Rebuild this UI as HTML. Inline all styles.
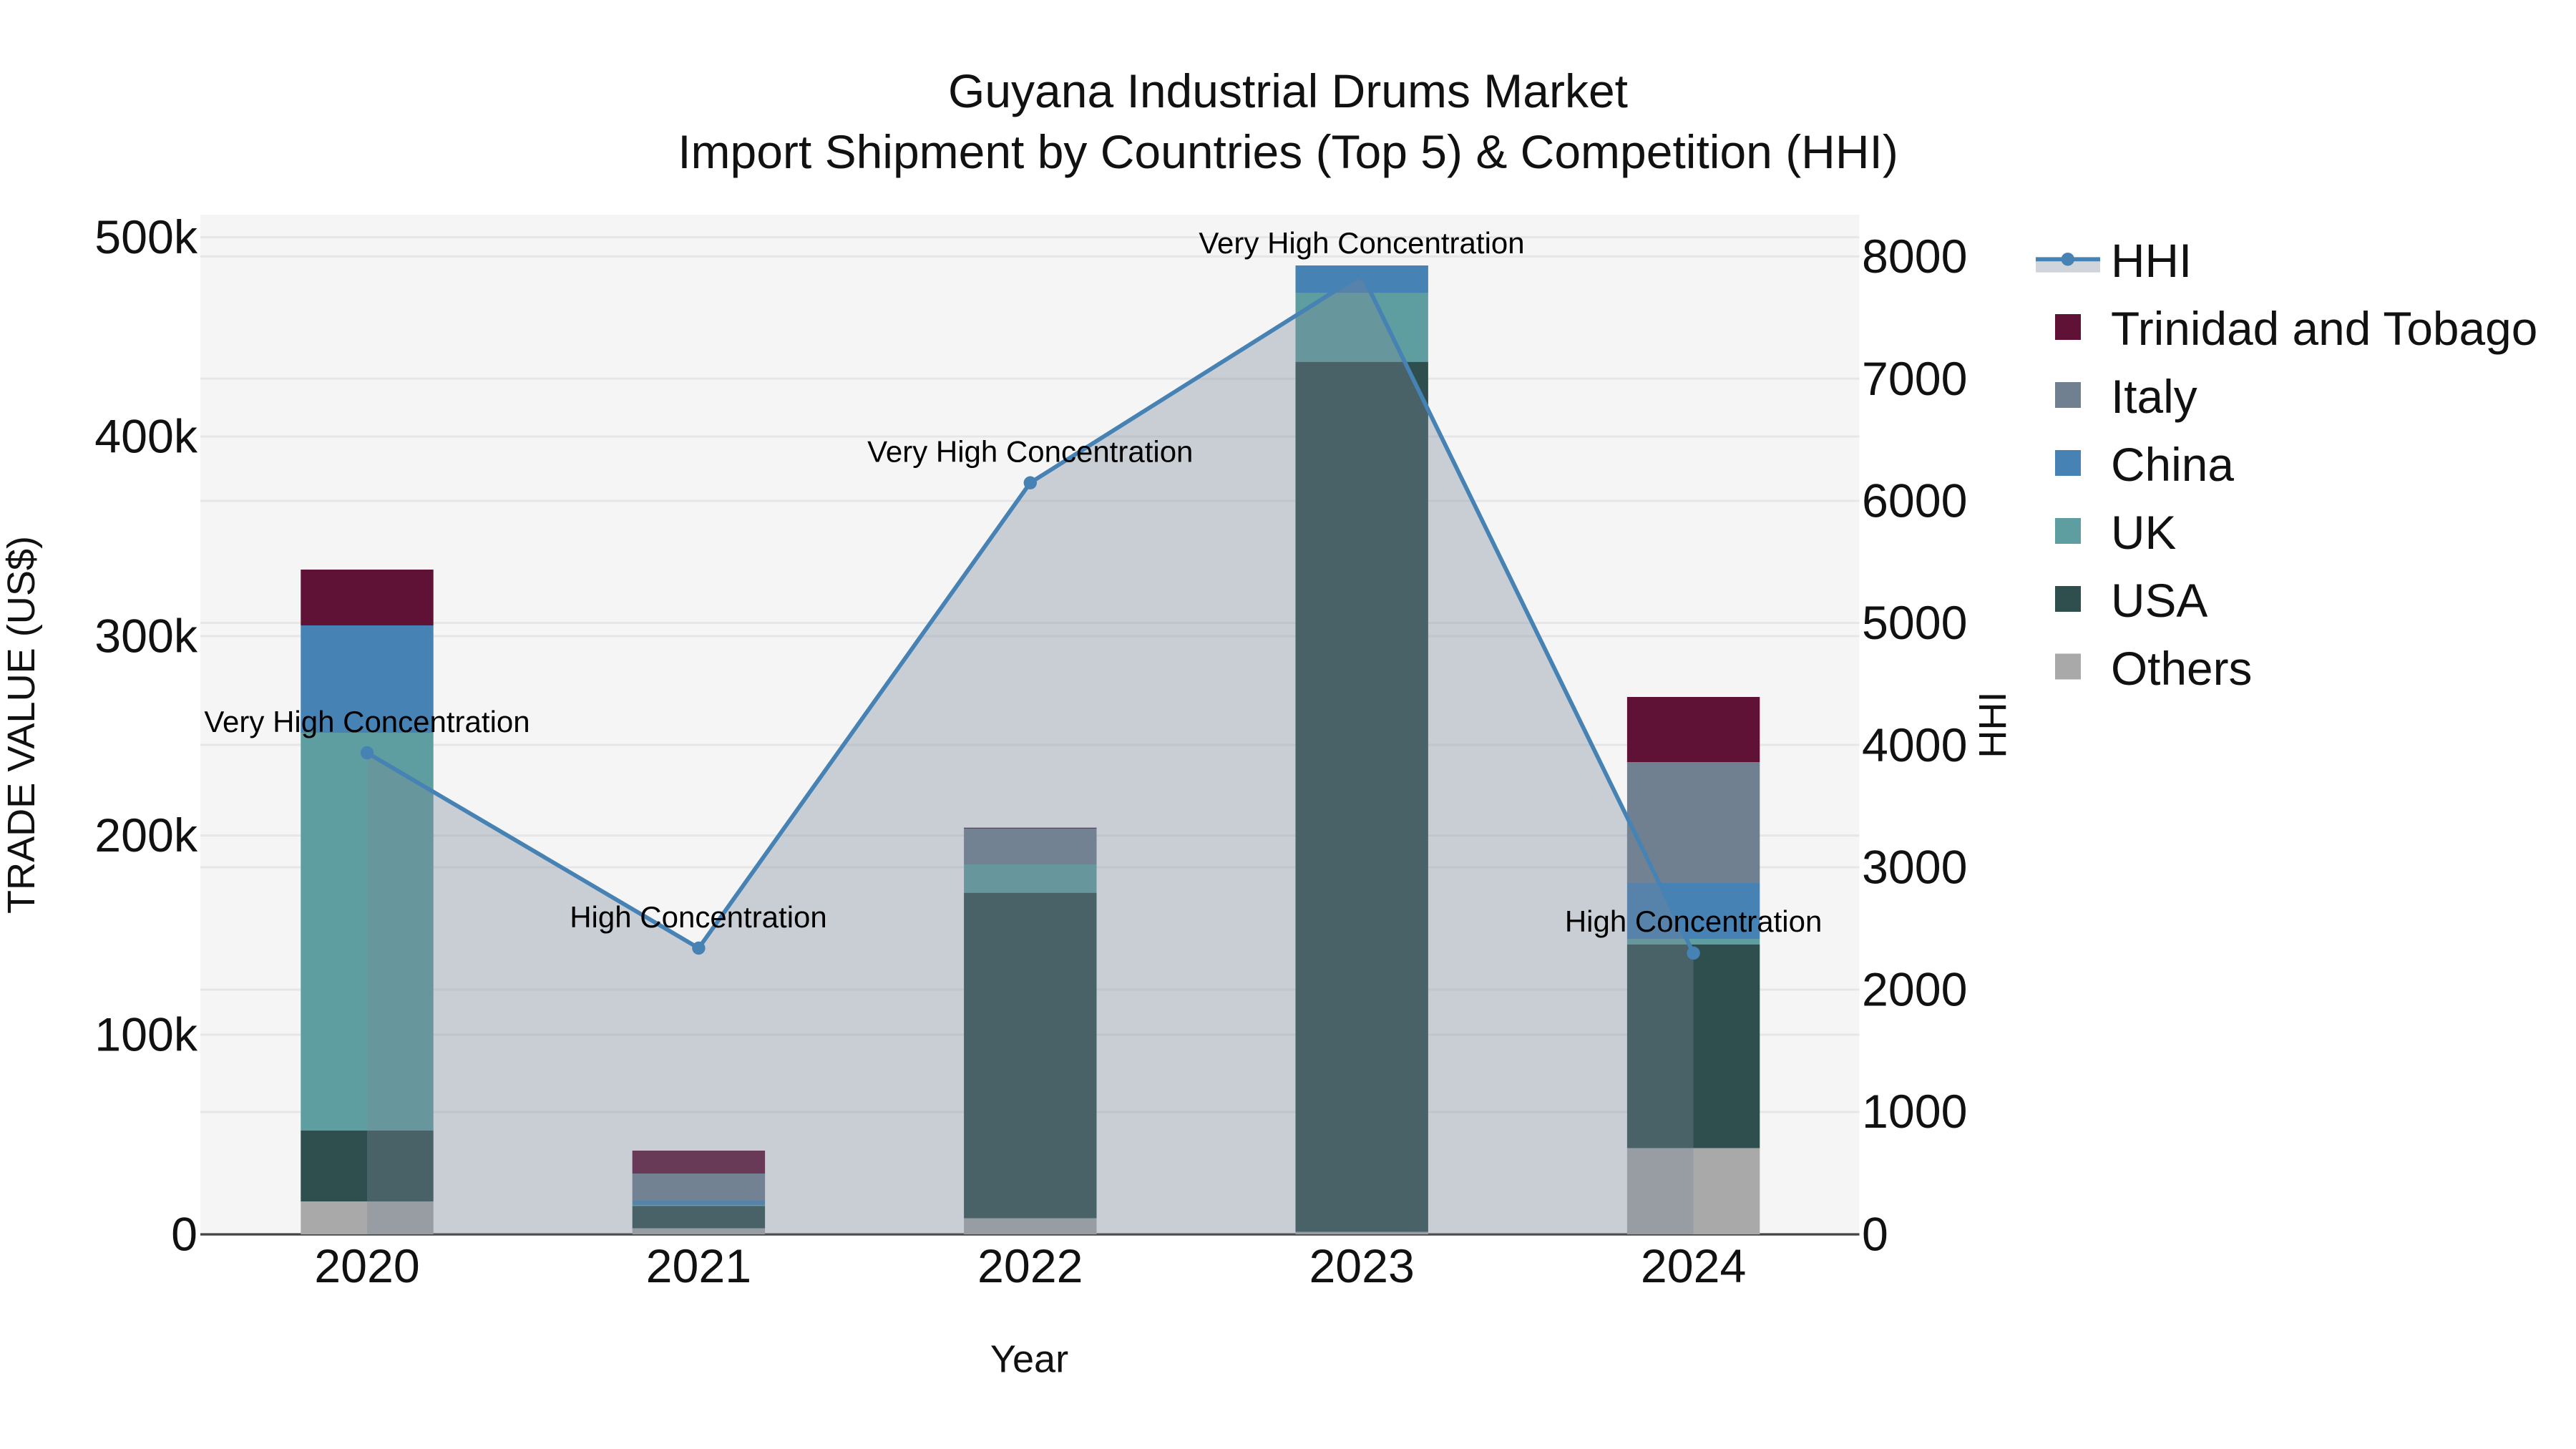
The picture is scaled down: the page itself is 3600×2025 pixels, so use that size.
<!DOCTYPE html>
<html lang="en">
<head>
<meta charset="utf-8">
<title>Guyana Industrial Drums Market</title>
<style>
html,body{margin:0;padding:0;background:#fff;width:3600px;height:2025px;overflow:hidden}
svg{display:block}
text{font-family:"Liberation Sans",Arial,sans-serif;fill:#111}
.h{font-size:66px}
.t{font-size:66.3px}
.l{font-size:65.8px}
.a{font-size:42px;fill:#000;text-anchor:middle}
.ax{font-size:54.1px}
</style>
</head>
<body>
<svg width="3600" height="2025" viewBox="0 0 3600 2025" xmlns="http://www.w3.org/2000/svg">
<rect width="3600" height="2025" fill="#fff"/>
<rect x="280" y="300" width="2318.5" height="1425" fill="#f5f5f5"/>
<g stroke="#e6e6e6" stroke-width="3">
<path d="M280 331.5H2598.5M280 610H2598.5M280 889H2598.5M280 1167.6H2598.5M280 1446H2598.5"/>
<path d="M280 358.4H2598.5M280 529.3H2598.5M280 700H2598.5M280 870.5H2598.5M280 1041H2598.5M280 1212H2598.5M280 1383H2598.5M280 1554H2598.5"/>
</g>
<rect x="280" y="1723.4" width="2318.5" height="3.3" fill="#444"/>

<!-- 2020 -->
<rect x="420.3" y="796" width="185.4" height="78" fill="#601236"/>
<rect x="420.3" y="874" width="185.4" height="150" fill="#4682b4"/>
<rect x="420.3" y="1024" width="185.4" height="556" fill="#5f9ea0"/>
<rect x="420.3" y="1580" width="185.4" height="99" fill="#2f4f4f"/>
<rect x="420.3" y="1679" width="185.4" height="46" fill="#a9a9a9"/>
<!-- 2021 -->
<rect x="883.7" y="1608" width="185.4" height="32" fill="#601236"/>
<rect x="883.7" y="1640" width="185.4" height="38" fill="#708090"/>
<rect x="883.7" y="1678" width="185.4" height="6.3" fill="#4682b4"/>
<rect x="883.7" y="1684.3" width="185.4" height="1" fill="#5f9ea0"/>
<rect x="883.7" y="1685.3" width="185.4" height="31.4" fill="#2f4f4f"/>
<rect x="883.7" y="1716.7" width="185.4" height="8.3" fill="#a9a9a9"/>
<!-- 2022 -->
<rect x="1347.1" y="1156.7" width="185.4" height="1.3" fill="#601236"/>
<rect x="1347.1" y="1158" width="185.4" height="50" fill="#708090"/>
<rect x="1347.1" y="1208" width="185.4" height="39.7" fill="#5f9ea0"/>
<rect x="1347.1" y="1247.7" width="185.4" height="455" fill="#2f4f4f"/>
<rect x="1347.1" y="1702.7" width="185.4" height="22.3" fill="#a9a9a9"/>
<!-- 2023 -->
<rect x="1810.5" y="371" width="185.4" height="38.6" fill="#4682b4"/>
<rect x="1810.5" y="409.6" width="185.4" height="96.1" fill="#5f9ea0"/>
<rect x="1810.5" y="505.7" width="185.4" height="1215.9" fill="#2f4f4f"/>
<rect x="1810.5" y="1721.6" width="185.4" height="3.4" fill="#a9a9a9"/>
<!-- 2024 -->
<rect x="2273.9" y="974" width="185.4" height="91" fill="#601236"/>
<rect x="2273.9" y="1065" width="185.4" height="169" fill="#708090"/>
<rect x="2273.9" y="1234" width="185.4" height="78" fill="#4682b4"/>
<rect x="2273.9" y="1312" width="185.4" height="8" fill="#5f9ea0"/>
<rect x="2273.9" y="1320" width="185.4" height="284.6" fill="#2f4f4f"/>
<rect x="2273.9" y="1604.6" width="185.4" height="120.4" fill="#a9a9a9"/>

<!-- HHI area and line -->
<path d="M513 1725V1052L976.4 1325L1439.8 674.7L1903.2 383L2366.6 1332V1725Z" fill="#778899" fill-opacity=".35"/>
<path d="M513 1052L976.4 1325L1439.8 674.7L1903.2 383L2366.6 1332" fill="none" stroke="#4682b4" stroke-width="5.8" stroke-linejoin="round"/>
<g fill="#4682b4">
<circle cx="513" cy="1052" r="9.2"/>
<circle cx="976.4" cy="1325" r="9.2"/>
<circle cx="1439.8" cy="674.7" r="9.2"/>
<circle cx="1903.2" cy="383" r="9.2"/>
<circle cx="2366.6" cy="1332" r="9.2"/>
</g>

<!-- annotations -->
<text class="a" x="513" y="1022.8">Very High Concentration</text>
<text class="a" x="976" y="1296">High Concentration</text>
<text class="a" x="1439.8" y="645.4">Very High Concentration</text>
<text class="a" x="1903" y="354">Very High Concentration</text>
<text class="a" x="2366.6" y="1302">High Concentration</text>

<!-- title -->
<text class="h" x="1800" y="150" text-anchor="middle">Guyana Industrial Drums Market</text>
<text class="h" x="1800" y="235" text-anchor="middle">Import Shipment by Countries (Top 5) &amp; Competition (HHI)</text>

<!-- left ticks -->
<text class="t" x="276" y="354" text-anchor="end">500k</text>
<text class="t" x="276" y="632.6" text-anchor="end">400k</text>
<text class="t" x="276" y="911.6" text-anchor="end">300k</text>
<text class="t" x="276" y="1190" text-anchor="end">200k</text>
<text class="t" x="276" y="1468.5" text-anchor="end">100k</text>
<text class="t" x="276" y="1747.5" text-anchor="end">0</text>

<!-- right ticks -->
<text class="t" x="2602" y="381">8000</text>
<text class="t" x="2602" y="551.8">7000</text>
<text class="t" x="2602" y="722.6">6000</text>
<text class="t" x="2602" y="893.2">5000</text>
<text class="t" x="2602" y="1063.8">4000</text>
<text class="t" x="2602" y="1234.6">3000</text>
<text class="t" x="2602" y="1405.4">2000</text>
<text class="t" x="2602" y="1576.2">1000</text>
<text class="t" x="2602" y="1747.5">0</text>

<!-- x ticks -->
<text class="t" x="513" y="1792" text-anchor="middle">2020</text>
<text class="t" x="976.4" y="1792" text-anchor="middle">2021</text>
<text class="t" x="1439.8" y="1792" text-anchor="middle">2022</text>
<text class="t" x="1903.2" y="1792" text-anchor="middle">2023</text>
<text class="t" x="2366.6" y="1792" text-anchor="middle">2024</text>

<!-- axis titles -->
<text class="ax" x="1438.5" y="1917.5" text-anchor="middle">Year</text>
<text class="ax" transform="translate(48 1013) rotate(-90)" text-anchor="middle">TRADE VALUE (US$)</text>
<text class="ax" transform="translate(2803 1013) rotate(-90)" text-anchor="middle">HHI</text>

<!-- legend -->
<rect x="2845" y="362" width="90" height="18.7" fill="#778899" fill-opacity=".35"/>
<rect x="2845" y="359.4" width="90" height="5.8" fill="#4682b4"/>
<circle cx="2889.8" cy="362.3" r="9.2" fill="#4682b4"/>
<rect x="2872" y="439" width="36" height="36" fill="#601236"/>
<rect x="2872" y="534" width="36" height="36" fill="#708090"/>
<rect x="2872" y="629" width="36" height="36" fill="#4682b4"/>
<rect x="2872" y="724" width="36" height="36" fill="#5f9ea0"/>
<rect x="2872" y="819" width="36" height="36" fill="#2f4f4f"/>
<rect x="2872" y="913.5" width="36" height="36" fill="#a9a9a9"/>
<text class="l" x="2950" y="387">HHI</text>
<text class="l" x="2950" y="482">Trinidad and Tobago</text>
<text class="l" x="2950" y="577">Italy</text>
<text class="l" x="2950" y="672">China</text>
<text class="l" x="2950" y="767">UK</text>
<text class="l" x="2950" y="862">USA</text>
<text class="l" x="2950" y="957">Others</text>
</svg>
</body>
</html>
